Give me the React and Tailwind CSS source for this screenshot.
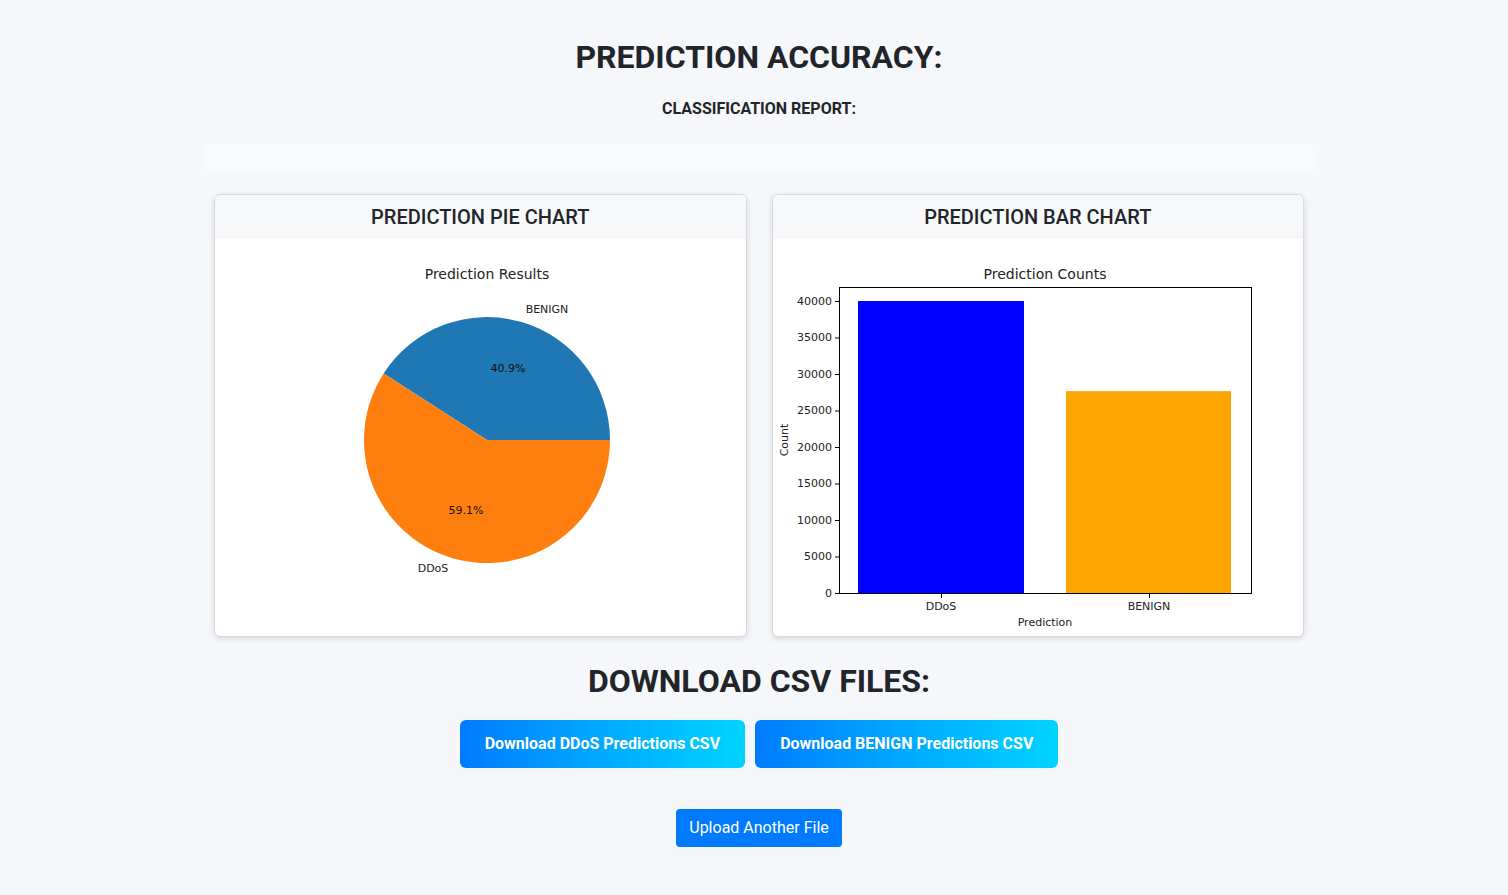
import React from 'react';

const FONT = { fontFamily: 'Roboto, "Liberation Sans", sans-serif' };
const MPL = 'DejaVu Sans, sans-serif';

// Pie chart (matplotlib-style), 40.9% BENIGN / 59.1% DDoS
const PieChart = () => (
  <svg width="530" height="397" viewBox="0 0 530 397" className="block">
    <text x="272" y="35" textAnchor="middle" dominantBaseline="central" fontFamily={MPL} fontSize="14" fill="#222">
      Prediction Results
    </text>
    <path d="M272,201 L395,201 A123,123 0 0 0 168.6,134.5 Z" fill="#1f77b4" />
    <path d="M272,201 L168.6,134.5 A123,123 0 1 0 395,201 Z" fill="#ff7f0e" />
    <text x="332" y="70" textAnchor="middle" dominantBaseline="central" fontFamily={MPL} fontSize="11" fill="#222">BENIGN</text>
    <text x="293" y="129" textAnchor="middle" dominantBaseline="central" fontFamily={MPL} fontSize="11" fill="#111">40.9%</text>
    <text x="251" y="271" textAnchor="middle" dominantBaseline="central" fontFamily={MPL} fontSize="11" fill="#111">59.1%</text>
    <text x="218" y="329" textAnchor="middle" dominantBaseline="central" fontFamily={MPL} fontSize="11" fill="#222">DDoS</text>
  </svg>
);

// Bar chart (matplotlib-style)
const BarChart = () => {
  const y = (v) => 354 - v * (292 / 40000);
  const ticks = [0, 5000, 10000, 15000, 20000, 25000, 30000, 35000, 40000];
  return (
    <svg width="530" height="397" viewBox="0 0 530 397" className="block">
      <text x="272" y="35" textAnchor="middle" dominantBaseline="central" fontFamily={MPL} fontSize="14" fill="#222">
        Prediction Counts
      </text>
      <rect x="85" y={y(40000)} width="166" height={354 - y(40000)} fill="#0000ff" />
      <rect x="293" y={y(27650)} width="165" height={354 - y(27650)} fill="#ffa500" />
      <rect x="66.5" y="48.5" width="412" height="306" fill="none" stroke="#000" strokeWidth="1" />
      {ticks.map((t) => (
        <g key={t}>
          <line x1="62" x2="66" y1={y(t) + 0.5} y2={y(t) + 0.5} stroke="#000" strokeWidth="1" />
          <text x="59" y={y(t)} textAnchor="end" dominantBaseline="central" fontFamily={MPL} fontSize="11" fill="#222">
            {t}
          </text>
        </g>
      ))}
      <line x1="168.5" x2="168.5" y1="355" y2="359" stroke="#000" strokeWidth="1" />
      <line x1="376.5" x2="376.5" y1="355" y2="359" stroke="#000" strokeWidth="1" />
      <text x="168" y="367" textAnchor="middle" dominantBaseline="central" fontFamily={MPL} fontSize="11" fill="#222">DDoS</text>
      <text x="376" y="367" textAnchor="middle" dominantBaseline="central" fontFamily={MPL} fontSize="11" fill="#222">BENIGN</text>
      <text x="272" y="383" textAnchor="middle" dominantBaseline="central" fontFamily={MPL} fontSize="11" fill="#222">Prediction</text>
      <text
        x="11"
        y="201"
        textAnchor="middle"
        dominantBaseline="central"
        fontFamily={MPL}
        fontSize="11"
        fill="#222"
        transform="rotate(-90 11 201)"
      >
        Count
      </text>
    </svg>
  );
};

const ChartCard = ({ title, children }) => (
  <div className="bg-white border border-[#d9dadc] rounded-md shadow-[0_2px_6px_rgba(0,0,0,0.12)] overflow-hidden">
    <div className="h-[44px] bg-[#f7f8fa] flex items-center justify-center text-[20px] font-medium text-[#212529]">
      {title}
    </div>
    <div className="flex justify-center">{children}</div>
  </div>
);

export default function App() {
  return (
    <div className="min-h-screen bg-[#f5f7fa] text-[#212529]" style={FONT}>
      <div className="w-[1120px] mx-auto pl-[10px] pt-[38px] pb-[40px] flex flex-col items-center">
        <h2 className="text-[32px] leading-[1.2] font-bold">PREDICTION ACCURACY:</h2>
        <h5 className="mt-[23px] text-[16px] leading-[1.2] font-bold">CLASSIFICATION REPORT:</h5>

        {/* Empty report block */}
        <pre className="mt-[25px] w-full h-[29px] bg-[#f8f9fb] rounded" />

        {/* Charts */}
        <div className="mt-[21px] w-full px-[10px] grid grid-cols-2 gap-[25px]">
          <ChartCard title="PREDICTION PIE CHART">
            <PieChart />
          </ChartCard>
          <ChartCard title="PREDICTION BAR CHART">
            <BarChart />
          </ChartCard>
        </div>

        <h2 className="mt-[25px] text-[32px] leading-[1.2] font-bold">DOWNLOAD CSV FILES:</h2>

        <div className="mt-[20px] flex gap-[10px]">
          <button className="h-[48px] px-[25px] rounded-md text-white text-[16px] font-bold bg-gradient-to-r from-[#007bff] to-[#00d4ff]">
            Download DDoS Predictions CSV
          </button>
          <button className="h-[48px] px-[25px] rounded-md text-white text-[16px] font-bold bg-gradient-to-r from-[#007bff] to-[#00d4ff]">
            Download BENIGN Predictions CSV
          </button>
        </div>

        <button className="mt-[41px] h-[38px] px-[13px] rounded bg-[#007bff] text-white text-[16px]">
          Upload Another File
        </button>
      </div>
    </div>
  );
}
